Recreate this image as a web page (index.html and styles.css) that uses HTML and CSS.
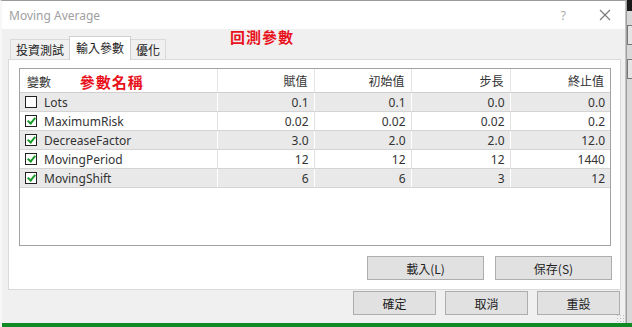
FILE: index.html
```
<!DOCTYPE html>
<html lang="zh-Hant">
<head>
    <meta charset="UTF-8">
    <title>Moving Average</title>
    <link rel="stylesheet" href="styles.css">
</head>
<body>
    <div class="screen">
        <div class="dialog">
            <div class="titlebar">
                <span class="title">Moving Average</span>
                <span class="help">?</span>
                <svg class="close" width="12" height="12" viewBox="0 0 12 12">
                    <path d="M1 1 L11 11 M11 1 L1 11" stroke="#777" stroke-width="1.1" fill="none"/>
                </svg>
            </div>
            <div class="content">
                <div class="tabs">
                    <div class="tab">投資測試</div>
                    <div class="tab active">輸入參數</div>
                    <div class="tab">優化</div>
                    <div class="note note-tabs">回測參數</div>
                </div>
                <div class="panel">
                    <div class="grid-box">
                        <table class="grid">
                            <colgroup>
                                <col style="width:197px">
                                <col style="width:97px">
                                <col style="width:97px">
                                <col style="width:99px">
                                <col>
                            </colgroup>
                            <thead>
                                <tr>
                                    <th class="name">變數 <span class="note note-head">參數名稱</span></th>
                                    <th>賦值</th>
                                    <th>初始值</th>
                                    <th>步長</th>
                                    <th>終止值</th>
                                </tr>
                            </thead>
                            <tbody>
                                <tr class="odd">
                                    <td class="name"><span class="check"></span>Lots</td>
                                    <td>0.1</td><td>0.1</td><td>0.0</td><td>0.0</td>
                                </tr>
                                <tr>
                                    <td class="name"><span class="check on"></span>MaximumRisk</td>
                                    <td>0.02</td><td>0.02</td><td>0.02</td><td>0.2</td>
                                </tr>
                                <tr class="odd">
                                    <td class="name"><span class="check on"></span>DecreaseFactor</td>
                                    <td>3.0</td><td>2.0</td><td>2.0</td><td>12.0</td>
                                </tr>
                                <tr>
                                    <td class="name"><span class="check on"></span>MovingPeriod</td>
                                    <td>12</td><td>12</td><td>12</td><td>1440</td>
                                </tr>
                                <tr class="odd">
                                    <td class="name"><span class="check on"></span>MovingShift</td>
                                    <td>6</td><td>6</td><td>3</td><td>12</td>
                                </tr>
                            </tbody>
                        </table>
                    </div>
                    <div class="panel-buttons">
                        <button class="btn wide">載入(L)</button>
                        <button class="btn wide">保存(S)</button>
                    </div>
                </div>
                <div class="dialog-buttons">
                    <button class="btn">確定</button>
                    <button class="btn">取消</button>
                    <button class="btn">重設</button>
                </div>
                <div class="grip"></div>
            </div>
        </div>
        <div class="side">
            <div class="side-top"></div>
            <div class="side-box"></div>
            <div class="side-box"></div>
        </div>
    </div>
    <div class="taskbar"></div>
</body>
</html>
```

FILE: styles.css
```
body {
    margin: 0;
    padding: 0;
    width: 632px;
    height: 327px;
    overflow: hidden;
    font-family: "Noto Sans", "Noto Sans CJK TC", sans-serif;
    font-size: 12px;
    color: #333;
    background: #f0f0f0;
}

.screen {
    display: flex;
    height: 323px;
}

.dialog {
    width: 626px;
    display: flex;
    flex-direction: column;
    border-top: 1px solid #9a9a9a;
    border-left: 2px solid #f7f7f7;
    border-right: 1px solid #c4c4c4;
    box-sizing: border-box;
    background: #f0f0f0;
}

.titlebar {
    height: 28px;
    background: #fff;
    display: flex;
    align-items: center;
    padding-left: 7px;
}

.title {
    color: #a0a0a0;
    font-size: 12px;
    flex: 1;
}

.help {
    color: #a8a8a8;
    font-size: 12px;
    margin-right: 33px;
}

.close {
    margin-right: 14px;
}

.content {
    flex: 1;
    position: relative;
}

.tabs {
    display: flex;
    align-items: flex-end;
    height: 30px;
    padding-left: 8px;
}

.tab {
    height: 19px;
    line-height: 19px;
    padding: 0 5px;
    border: 1px solid #d9d9d9;
    border-bottom: none;
    background: #f0f0f0;
    font-family: "Noto Sans CJK TC", sans-serif;
    font-size: 12px;
    color: #222;
}

.tab.active {
    height: 23px;
    line-height: 21px;
    background: #fff;
    padding: 0 6px;
    margin-bottom: -1px;
    position: relative;
    border-color: #d0d0d0;
}

.tab + .tab {
    margin-left: -1px;
}

.note {
    font-family: "Noto Sans CJK TC", sans-serif;
    font-weight: 700;
    color: #e8121c;
    font-size: 15px;
}

.note-tabs {
    align-self: flex-start;
    margin-left: 64px;
    margin-top: -3px;
    letter-spacing: 1px;
}

.note-head {
    margin-left: 26px;
    letter-spacing: 1px;
    position: relative;
    top: 1px;
}

.panel {
    margin: 0 4px 0 6px;
    height: 231px;
    background: #fff;
    border: 1px solid #d9d9d9;
    box-sizing: border-box;
    padding: 8px 9px 0 10px;
}

.grid-box {
    height: 178px;
    border: 1px solid #a2a2a2;
    box-sizing: border-box;
}

.grid {
    width: 100%;
    border-collapse: collapse;
    table-layout: fixed;
}

.grid th {
    height: 23px;
    font-weight: normal;
    text-align: right;
    padding: 0 6px 0 0;
    border-left: 1px solid #e5e5e5;
    border-bottom: 1px solid #cfcfcf;
    font-family: "Noto Sans CJK TC", sans-serif;
    color: #333;
}

.grid th.name {
    text-align: left;
    padding-left: 7px;
    border-left: none;
}

.grid td {
    height: 18px;
    padding: 0 5px 0 0;
    text-align: right;
    border-left: 1px solid #fff;
    border-bottom: 1px solid #d4d4d4;
    white-space: nowrap;
    color: #333;
}

.grid tr:not(.odd) td {
    border-left-color: #e2e2e2;
}

.grid td.name {
    text-align: left;
    padding-left: 5px;
    border-left: none;
}

.grid tr.odd td {
    background: #e9e9e9;
}

.check {
    display: inline-block;
    width: 10px;
    height: 10px;
    border: 1px solid #222;
    background: #fff;
    vertical-align: -1px;
    margin-right: 7px;
    position: relative;
}

.check.on::after {
    content: "";
    position: absolute;
    left: 3px;
    top: 0px;
    width: 3px;
    height: 6px;
    border-right: 2px solid #1a9a2a;
    border-bottom: 2px solid #1a9a2a;
    transform: rotate(40deg);
}

.panel-buttons {
    display: flex;
    justify-content: flex-end;
    gap: 11px;
    margin-top: 10px;
}

.btn {
    height: 24px;
    width: 83px;
    background: #e1e1e1;
    border: 1px solid #adadad;
    font-family: "Noto Sans CJK TC", sans-serif;
    font-size: 12px;
    color: #222;
    padding: 0;
}

.btn.wide {
    width: 117px;
}

.panel-buttons .btn:last-child {
    margin-right: -1px;
}

.dialog-buttons {
    display: flex;
    justify-content: flex-end;
    gap: 9px;
    margin-top: 1px;
    padding-right: 5px;
}

.grip {
    position: absolute;
    right: 1px;
    bottom: 1px;
    width: 8px;
    height: 8px;
    background: radial-gradient(circle, #b8b8b8 0.8px, transparent 1px) 0 0 / 3px 3px;
}

.side {
    flex: 1;
    background: #d8d8d8;
    border-left: 1px solid #a0a0a0;
}

.side-top {
    height: 11px;
    background: #1a1a1a;
}

.side-box {
    height: 18px;
    margin-top: 14px;
    border: 1px solid #777;
    border-right: none;
    background: #e4e4e4;
}

.side-box:first-of-type {
    margin-top: 70px;
}

.taskbar {
    height: 4px;
    margin-left: 2px;
    background: #108a22;
}
```
